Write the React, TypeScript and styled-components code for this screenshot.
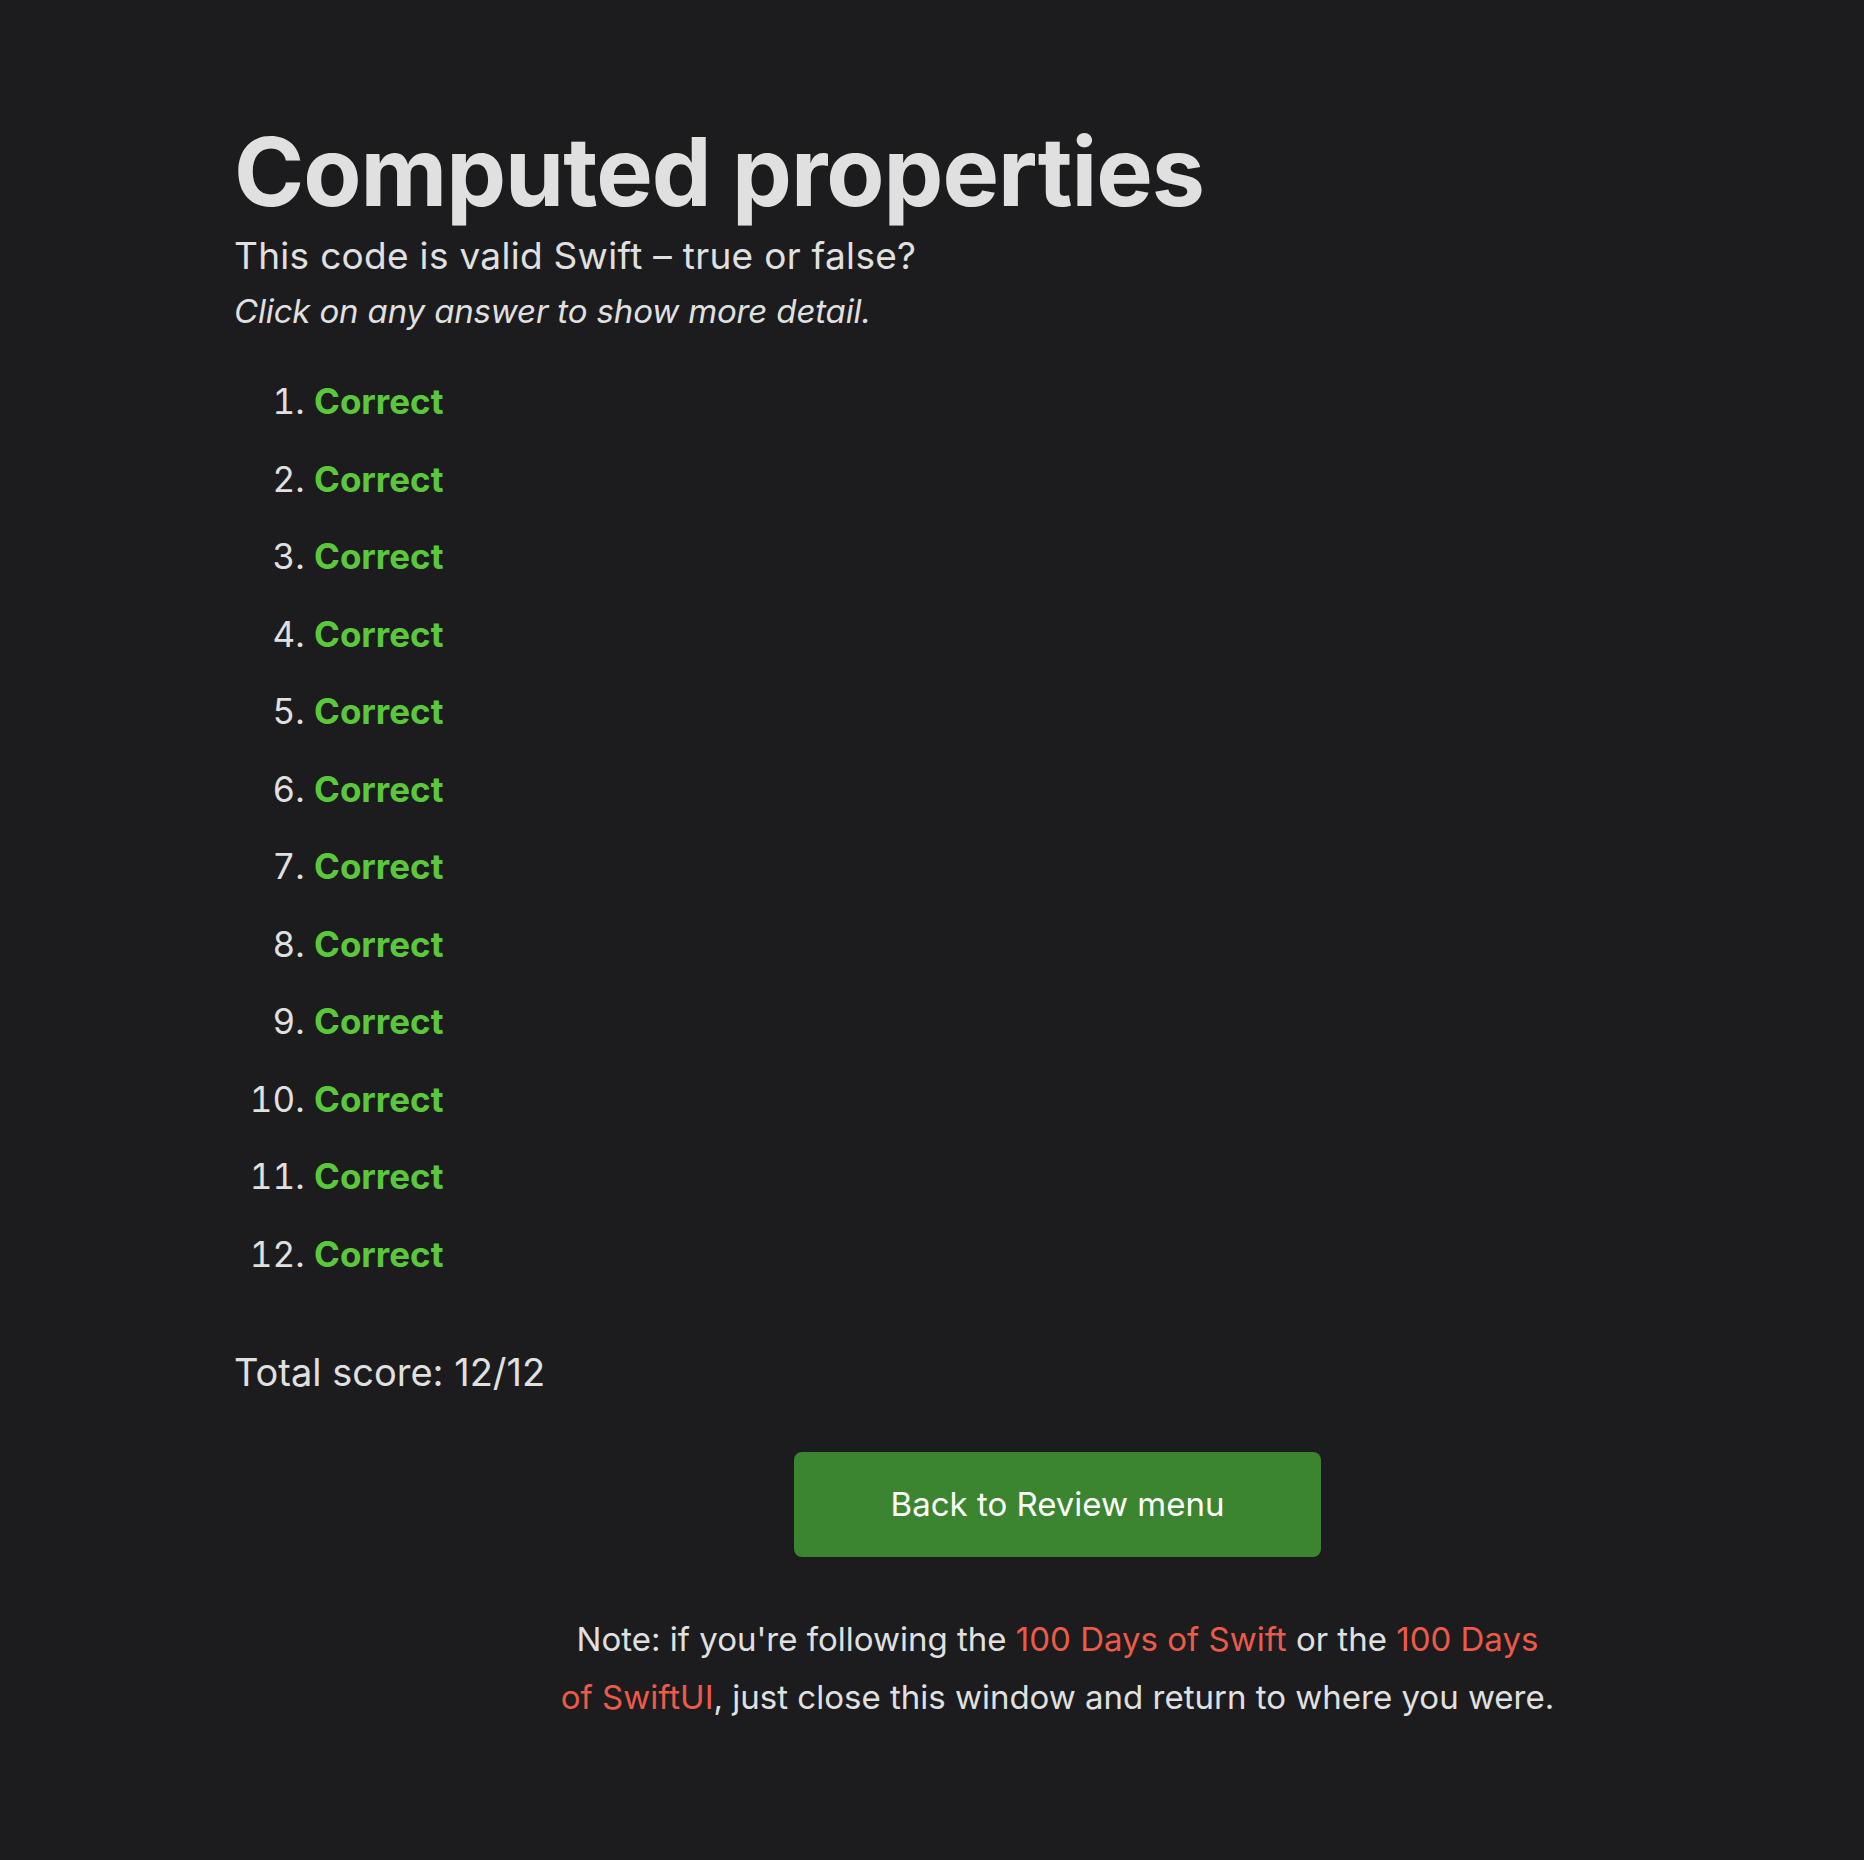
import React from "react";
import styled, { createGlobalStyle } from "styled-components";

const Global = createGlobalStyle`
  html, body {
    margin: 0;
    padding: 0;
    background: #1c1c1e;
  }
  body {
    font-family: Inter, "Noto Sans", "Liberation Sans", sans-serif;
    color: #e0e0e0;
  }
`;

const Page = styled.main`
  min-height: 1860px;
  box-sizing: border-box;
  padding: 117px 19px 80px 234px;
`;

const Title = styled.h1`
  margin: 0;
  font-size: 95px;
  font-weight: 700;
  line-height: 1.15;
  letter-spacing: -1px;
  color: #e0e0e0;
`;

const Subtitle = styled.p`
  margin: 4px 0 0;
  font-size: 37px;
  font-weight: 400;
  line-height: 1.4;
  letter-spacing: 0.3px;
`;

const Hint = styled.p`
  margin: 6px 0 0;
  font-size: 33px;
  font-style: italic;
  line-height: 1.4;
  letter-spacing: -0.15px;
`;

const AnswerList = styled.ol`
  margin: 40px 0 0;
  padding-left: 80px;
  list-style: decimal;
`;

const Answer = styled.li`
  font-size: 35px;
  line-height: 54px;
  margin-bottom: 23.5px;
  &::marker {
    color: #e0e0e0;
  }
`;

const Verdict = styled.span<{ $ok: boolean }>`
  font-weight: 700;
  color: ${(p) => (p.$ok ? "#5bc83c" : "#ec5a48")};
  cursor: pointer;
`;

const Score = styled.p`
  margin: 65px 0 0;
  font-size: 38px;
  line-height: 1.4;
`;

const Footer = styled.section`
  padding-left: 36px;
  display: flex;
  flex-direction: column;
  align-items: center;
`;

const BackButton = styled.a`
  display: flex;
  align-items: center;
  justify-content: center;
  margin-top: 53px;
  width: 527px;
  height: 105px;
  border-radius: 8px;
  background: #3c8530;
  color: #ffffff;
  font-size: 33px;
  text-decoration: none;
  cursor: pointer;
`;

const Note = styled.p`
  margin: 53px 0 0;
  width: 1000px;
  text-align: center;
  font-size: 33px;
  line-height: 58px;
`;

const Link = styled.a`
  color: #ec5a48;
  text-decoration: none;
`;

export default function App() {
  const answers = Array.from({ length: 12 }, () => true);
  return (
    <>
      <Global />
      <Page>
        <Title>Computed properties</Title>
        <Subtitle>This code is valid Swift – true or false?</Subtitle>
        <Hint>Click on any answer to show more detail.</Hint>
        <AnswerList>
          {answers.map((ok, i) => (
            <Answer key={i}>
              <Verdict $ok={ok}>{ok ? "Correct" : "Wrong"}</Verdict>
            </Answer>
          ))}
        </AnswerList>
        <Score>Total score: 12/12</Score>
        <Footer>
          <BackButton>Back to Review menu</BackButton>
          <Note>
            Note: if you're following the <Link>100 Days of Swift</Link> or the{" "}
            <Link>100 Days of SwiftUI</Link>, just close this window and return
            to where you were.
          </Note>
        </Footer>
      </Page>
    </>
  );
}
